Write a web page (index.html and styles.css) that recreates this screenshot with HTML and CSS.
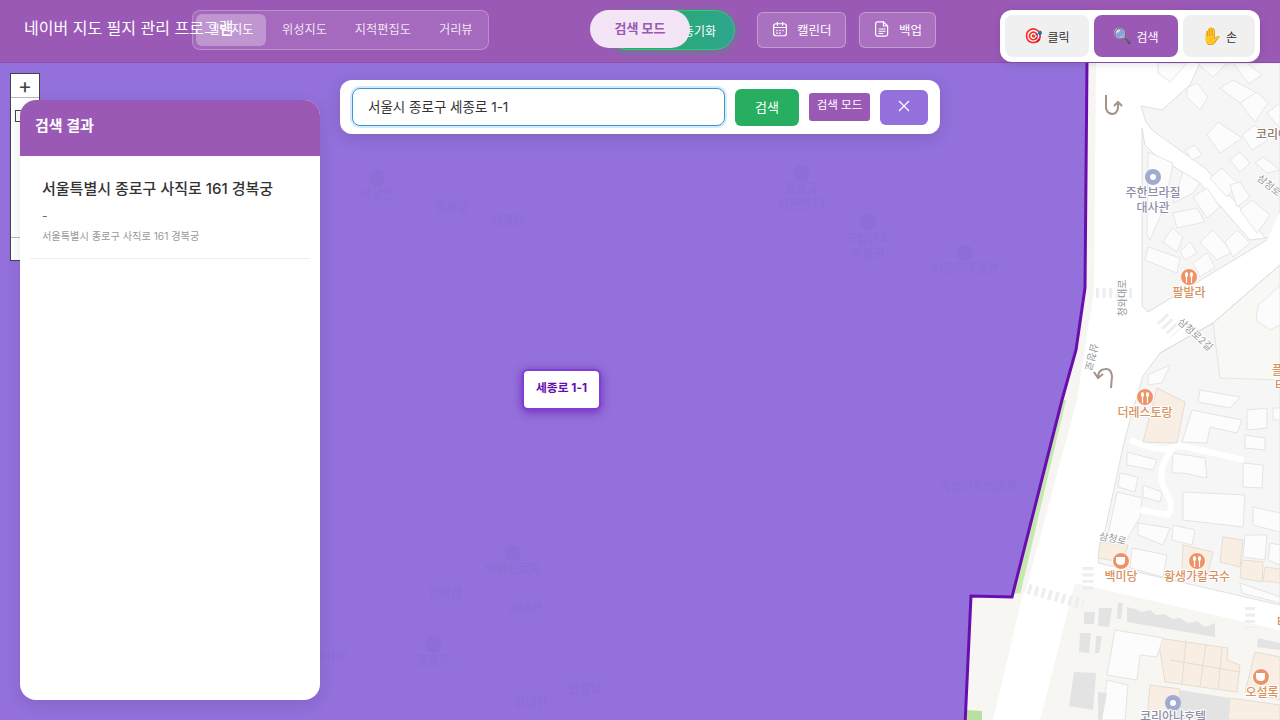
FILE: index.html
```html
<!DOCTYPE html>
<html lang="ko">
<head>
    <meta charset="UTF-8">
    <meta name="viewport" content="width=device-width, initial-scale=1.0">
    <title>네이버 지도 필지 관리 프로그램</title>
    <link rel="stylesheet" href="styles.css">
</head>
<body>

    <header class="header">
        <h1 class="app-title">네이버 지도 필지 관리 프로그램</h1>

        <div class="map-types">
            <button class="map-type active">일반지도</button>
            <button class="map-type">위성지도</button>
            <button class="map-type">지적편집도</button>
            <button class="map-type">거리뷰</button>
        </div>

        <div class="sync-toggle">
            <span class="sync-label">동기화</span>
            <span class="mode-pill">검색 모드</span>
        </div>

        <button class="header-btn btn-calendar">
            <svg class="header-icon" viewBox="0 0 24 24"><rect x="3.500" y="5" width="17" height="16" rx="3"/><path d="M3.500 10h17M8.500 3v4M15.500 3v4"/><path d="M8 14h.01M12 14h.01M16 14h.01M8 17.500h.01M12 17.500h.01" stroke-width="2.200"/></svg>
            캘린더
        </button>
        <button class="header-btn btn-backup">
            <svg class="header-icon" viewBox="0 0 24 24"><path d="M6 2.500h8l5.500 5.500v11a2.500 2.500 0 0 1-2.500 2.500H6A2.500 2.500 0 0 1 3.500 19V5A2.500 2.500 0 0 1 6 2.500z"/><path d="M14 2.500V8h5.500M8 12h8M8 15h8M8 18h5"/></svg>
            백업
        </button>

        <div class="tools">
            <button class="tool tool-click"><span class="tool-emoji">🎯</span>클릭</button>
            <button class="tool tool-search active"><span class="tool-emoji">🔍</span>검색</button>
            <button class="tool tool-hand"><span class="tool-emoji">✋</span>손</button>
        </div>
    </header>

    <main class="map-area">
        <svg class="map" viewBox="0 63 1280 657" width="1280" height="657">
            <!-- ground -->
            <rect x="960" y="63" width="320" height="657" fill="#ffffff"/>
            <polygon points="1089,63 1096,63 1094,290 1077,400 1025,593 1013,597 1062,400 1076,350 1085,288" fill="#f6f5f1"/>
            <polygon points="1062,400 1066,400 1020,595 1012,597" fill="#c6e6b2"/>
            <polygon points="968,597 1023,593 993,720 964,720" fill="#f7f6f3"/>
            <polygon points="967,710 982,711 982,720 966,720" fill="#b9e0a2"/>

            <!-- blocks -->
            <g fill="#f6f6f6" stroke="#e0e0de" stroke-width="1">
                <polygon points="1141,106 1162,110 1190,85 1200,63 1280,63 1280,258 1253,222 1205,168 1152,130 1146,122"/>
                <polygon points="1142,128 1145,145 1155,155 1200,183 1250,240 1267,238 1280,228 1280,212 1280,235 1148,312 1142,306"/>
                <polygon points="1160,353 1213,323 1280,265 1280,605 1098,563 1123,447 1130,420 1143,376"/>
            </g>
            <polygon points="1213,323 1280,265 1280,380 1220,378" fill="#f8f8f5" stroke="#e6e5e0"/>
            <polygon points="1075,583 1280,630 1280,720 1040,720" fill="#f7f6f3"/>
            <path d="M1147,140 L1200,173 L1253,233" fill="none" stroke="#ffffff" stroke-width="7"/>
            <polygon points="1280,212 1280,262 1214,318 1162,350 1148,312 1267,240" fill="#ffffff"/>
            <path d="M1148,312 L1267,240 M1160,353 L1213,323 L1280,265" fill="none" stroke="#dededa" stroke-width="1"/>

            <!-- upper buildings -->
            <g fill="#fcfcfc" stroke="#e6e6e4" stroke-width="1">
                <polygon points="1158,63 1187,63 1170,82 1158,73"/>
                <polygon points="1197,63 1213,77 1227,63"/>
                <polygon points="1187,88 1197,83 1208,97 1200,110 1187,97"/>
                <polygon points="1207,135 1218,122 1242,138 1220,153"/>
                <polygon points="1220,88 1233,80 1257,93 1240,103"/>
                <polygon points="1240,103 1257,92 1268,103 1255,122"/>
                <polygon points="1233,63 1247,63 1262,75 1249,84"/>
                <polygon points="1230,160 1240,152 1250,163 1240,172"/>
                <polygon points="1255,163 1263,157 1280,170 1267,173"/>
                <polygon points="1267,113 1280,103 1280,128"/>
                <polygon points="1242,135 1255,125 1268,140 1252,150"/>
                <polygon points="1185,150 1195,145 1202,155 1192,160"/>
                <polygon points="1148,152 1173,163 1165,205 1150,240 1147,235"/>
                <polygon points="1183,172 1200,183 1193,193 1173,203"/>
                <polygon points="1193,197 1207,188 1220,207 1207,218"/>
                <polygon points="1210,178 1222,168 1237,183 1227,197"/>
                <polygon points="1230,185 1240,182 1250,197 1237,207"/>
                <polygon points="1240,210 1252,200 1270,215 1257,233"/>
                <polygon points="1173,213 1197,208 1205,222 1177,228"/>
                <polygon points="1163,242 1172,228 1183,237 1177,252"/>
                <polygon points="1145,260 1148,247 1180,258 1177,273"/>
                <polygon points="1200,242 1213,230 1232,252 1217,260"/>
                <polygon points="1225,242 1237,230 1250,243 1233,257"/>
                <polygon points="1193,263 1207,253 1215,267 1200,277"/>
                <polygon points="1180,252 1190,242 1197,253 1185,260"/>
                <polygon points="1258,306 1280,285 1280,325 1270,330 1256,320"/>
                <polygon points="1148,375 1170,365 1162,383 1148,385"/>
            </g>

            <!-- lower buildings -->
            <g fill="#fcfcfc" stroke="#e4e4e2" stroke-width="1">
                <polygon points="1127,452 1157,460 1153,470 1127,465"/>
                <polygon points="1120,473 1138,477 1135,492 1118,487"/>
                <polygon points="1117,492 1142,498 1140,517 1125,543 1107,540"/>
                <polygon points="1143,485 1162,492 1160,502 1143,497"/>
                <polygon points="1173,453 1205,458 1207,478 1183,473 1172,473"/>
                <polygon points="1183,492 1245,495 1243,527 1183,520"/>
                <polygon points="1138,523 1170,528 1163,545 1138,535"/>
                <polygon points="1173,525 1195,530 1192,545 1172,540"/>
                <polygon points="1132,548 1167,555 1163,577 1130,568"/>
                <polygon points="1192,410 1242,420 1237,433 1210,427 1207,443 1182,442"/>
                <polygon points="1243,463 1263,465 1262,488 1243,487"/>
                <polygon points="1247,410 1267,408 1267,428 1247,430"/>
                <polygon points="1245,435 1265,438 1265,450 1245,448"/>
                <polygon points="1273,408 1280,408 1280,420 1273,420"/>
                <polygon points="1253,507 1280,513 1280,532 1253,525"/>
                <polygon points="1245,535 1267,535 1265,560 1243,557"/>
                <polygon points="1270,543 1280,545 1280,565 1268,560"/>
                <polygon points="1240,583 1280,597 1280,603 1242,593"/>
                <polygon points="1200,390 1240,397 1230,408 1198,402"/>
            </g>
            <path d="M1130,440 Q1165,455 1178,445 L1244,460 M1172,450 Q1155,470 1165,490 Q1175,505 1168,515 L1140,510" fill="none" stroke="#ffffff" stroke-width="6"/>

            <!-- beige buildings -->
            <g fill="#f9eee3" stroke="#e6ddd2" stroke-width="1">
                <polygon points="1157,388 1185,402 1177,443 1143,442"/>
                <polygon points="1100,542 1128,545 1123,562 1098,558"/>
                <polygon points="1183,545 1213,552 1207,577 1182,570"/>
                <polygon points="1223,537 1243,540 1240,567 1220,562"/>
                <polygon points="1242,560 1263,562 1262,582 1240,578"/>
                <polygon points="1265,567 1280,569 1280,583 1263,581"/>
                <polygon points="1158,638 1228,648 1227,660 1240,665 1237,692 1165,682"/>
                <polygon points="1255,652 1280,657 1280,700 1245,692"/>
                <polygon points="1150,685 1180,689 1177,720 1147,720"/>
                <polygon points="1230,698 1280,705 1280,720 1228,720"/>
            </g>
            <path d="M1170,660 L1240,672 M1186,640 L1182,684 M1206,644 L1200,686 M1222,648 L1218,690" stroke="#e6ddd2" fill="none"/>

            <!-- bottom block -->
            <g fill="#fcfcfc" stroke="#e4e4e2" stroke-width="1">
                <polygon points="1115,630 1163,638 1157,657 1140,655 1137,680 1107,675"/>
                <polygon points="1107,680 1128,685 1125,720 1100,720"/>
            </g>
            <g fill="#e3e3e3">
                <polygon points="1127,607 1135,609 1142,612 1150,610 1156,615 1165,614 1172,619 1180,618 1188,623 1197,621 1205,627 1215,623 1215,637 1127,622"/>
                <polygon points="1084,612 1095,612 1094,624 1084,624"/>
                <polygon points="1099,608 1112,608 1109,627 1098,626"/>
                <polygon points="1118,603 1123,603 1121,619 1117,619"/>
                <polygon points="1080,633 1091,633 1089,653 1079,652"/>
                <polygon points="1096,636 1102,636 1099,653 1095,653"/>
                <polygon points="1074,672 1096,673 1093,710 1069,706"/>
                <polygon points="1098,692 1107,693 1102,720 1098,720"/>
                <polygon points="1258,638 1280,643 1280,650 1257,647"/>
                <polygon points="1180,690 1230,698 1228,720 1177,720"/>
            </g>

            <!-- crosswalks -->
            <g fill="none" stroke="#eceeef">
                <path d="M1096,293 H1134" stroke-width="10" stroke-dasharray="3 3.600"/>
                <path d="M1162,318 L1176,333" stroke-width="14" stroke-dasharray="3 3.500"/>
                <path d="M1028,589 L1083,604" stroke-width="10" stroke-dasharray="3.500 3.500"/>
                <path d="M1088,567 V591" stroke-width="11" stroke-dasharray="3 3.500"/>
                <path d="M1250,607 V628" stroke-width="10" stroke-dasharray="3 3.500"/>
            </g>

            <!-- turn arrows -->
            <g fill="none" stroke="#a39389" stroke-width="2">
                <path d="M1106,95 V108 Q1107,114 1113,114 Q1119,113 1118,103 M1114,106 L1118,102 L1122,106"/>
                <path d="M1111,388 L1112,376 Q1111,368 1105,369 Q1098,370 1098,377 M1094,372 L1098,378 L1103,374"/>
            </g>

            <!-- place icons -->
            <circle cx="1153" cy="177" r="8" fill="#a1aacf"/>
            <circle cx="1153" cy="177" r="3" fill="#ffffff"/>
            <circle cx="1173" cy="703" r="8" fill="#a1aacf"/>
            <circle cx="1173" cy="703" r="3" fill="#ffffff"/>
            <g fill="#ee9268" stroke="#ffffff" stroke-width="1">
                <circle cx="1189" cy="277" r="8.500"/>
                <circle cx="1145" cy="397" r="8.500"/>
                <circle cx="1197" cy="561" r="8.500"/>
                <circle cx="1121" cy="561" r="8.500"/>
                <circle cx="1261" cy="677" r="8.500"/>
            </g>
            <g fill="none" stroke="#ffffff" stroke-width="1.200">
                <path d="M1186.500,275 V283 M1191.500,275 V283"/>
                <path d="M1142.500,395 V403 M1147.500,395 V403"/>
                <path d="M1194.500,559 V567 M1199.500,559 V567"/>
            </g>
            <g fill="#ffffff">
                <ellipse cx="1186.500" cy="274.500" rx="1.600" ry="2.500"/>
                <ellipse cx="1191.500" cy="274.500" rx="1.600" ry="2.500"/>
                <ellipse cx="1142.500" cy="394.500" rx="1.600" ry="2.500"/>
                <ellipse cx="1147.500" cy="394.500" rx="1.600" ry="2.500"/>
                <ellipse cx="1194.500" cy="558.500" rx="1.600" ry="2.500"/>
                <ellipse cx="1199.500" cy="558.500" rx="1.600" ry="2.500"/>
                <path d="M1116,557 H1125 V561 Q1125,565 1121,565 Q1116,565 1116,561 Z"/>
                <path d="M1256,673 H1265 V677 Q1265,681 1261,681 Q1256,681 1256,677 Z"/>
            </g>

            <!-- map labels -->
            <g class="map-label label-place">
                <text x="1153" y="197">주한브라질</text>
                <text x="1153" y="212">대사관</text>
                <text x="1173" y="721">코리아나호텔</text>
            </g>
            <g class="map-label label-food">
                <text x="1189" y="297">팔발라</text>
                <text x="1145" y="417">더레스토랑</text>
                <text x="1121" y="581">백미당</text>
                <text x="1197" y="581">황생가칼국수</text>
                <text x="1262" y="697">오설록</text>
                <text class="label-cut" x="1272" y="375">플래</text>
                <text class="label-cut" x="1275" y="390">타워</text>
                <text class="label-cut" x="1277" y="627">타워</text>
            </g>
            <text class="map-label label-brown label-cut" x="1256" y="139">코리아나</text>
            <g class="map-label label-road">
                <text transform="translate(1126,298) rotate(-90)">청와대로</text>
                <text transform="translate(1088,356) rotate(105)">삼청로</text>
                <text transform="translate(1193,337) rotate(42)">삼청로2길</text>
                <text transform="translate(1112,542) rotate(12)">삼청로</text>
                <text transform="translate(1267,188) rotate(40)">삼청로</text>
            </g>

            <!-- parcel overlay -->
            <polygon points="-5,58 1087,58 1087,63 1085,288 1076,350 1062,400 1012,597 971,596 965,725 -5,725" fill="#9370db" stroke="#6a0dad" stroke-width="3"/>

            <!-- map showing through the overlay -->
            <g fill="none" stroke="#916fd9" stroke-width="1">
                <rect x="425" y="190" width="120" height="60"/>
                <rect x="445" y="290" width="180" height="170"/>
                <rect x="410" y="515" width="90" height="120"/>
                <rect x="475" y="550" width="160" height="80"/>
                <rect x="720" y="160" width="45" height="160"/>
                <rect x="825" y="265" width="110" height="110"/>
                <rect x="910" y="225" width="100" height="170"/>
                <rect x="370" y="640" width="60" height="70"/>
                <rect x="600" y="650" width="70" height="60"/>
            </g>
            <g fill="#8f6dd6">
                <circle cx="377" cy="178" r="8"/>
                <circle cx="801" cy="173" r="8"/>
                <circle cx="868" cy="222" r="8"/>
                <circle cx="965" cy="253" r="8"/>
                <circle cx="513" cy="553" r="8"/>
                <circle cx="433" cy="645" r="8"/>
            </g>
            <g class="map-label label-ghost">
                <text x="377" y="199">미상문</text>
                <text x="452" y="212">함화당</text>
                <text x="508" y="225">집경당</text>
                <text x="801" y="193">경복궁</text>
                <text x="801" y="208">선원전 터</text>
                <text x="868" y="243">국립민속</text>
                <text x="868" y="258">박물관</text>
                <text x="965" y="273">어린이박물관</text>
                <text x="513" y="573">아미산굴뚝</text>
                <text x="445" y="598">함원전</text>
                <text x="525" y="613">교태전</text>
                <text x="433" y="665">흥경각</text>
                <text x="330" y="661">경회루</text>
                <text x="585" y="693">연길당</text>
                <text x="531" y="707">강녕전</text>
                <text x="978" y="491">국립민속박물관</text>
            </g>
        </svg>

        <div class="zoom-control">
            <button class="zoom-btn">+</button>
            <span class="zoom-track"><i class="zoom-thumb"></i></span>
            <button class="zoom-btn zoom-out"></button>
        </div>

        <aside class="results">
            <div class="results-head">검색 결과</div>
            <div class="result-item">
                <div class="result-title">서울특별시 종로구 사직로 161 경복궁</div>
                <div class="result-dash">-</div>
                <div class="result-addr">서울특별시 종로구 사직로 161 경복궁</div>
            </div>
        </aside>

        <div class="search-bar">
            <input class="search-input" type="text" value="서울시 종로구 세종로 1-1">
            <button class="search-btn">검색</button>
            <span class="search-tag">검색 모드</span>
            <button class="search-close">
                <svg class="close-icon" viewBox="0 0 12 12"><path d="M1 1l10 10M11 1L1 11"/></svg>
            </button>
        </div>

        <div class="marker">세종로 1-1</div>
    </main>

</body>
</html>
```

FILE: styles.css
```css
* {
    box-sizing: border-box;
}
body {
    margin: 0;
    width: 1280px;
    height: 720px;
    overflow: hidden;
    display: flex;
    flex-direction: column;
    font-family: Inter, "Noto Sans CJK KR", sans-serif;
    color: #333;
    background-color: #9370db;
}
button {
    font-family: inherit;
    cursor: pointer;
}

/* header */
.header {
    display: flex;
    align-items: flex-start;
    height: 63px;
    padding: 10px 20px 0 24px;
    background-color: #9b59b6;
    border-bottom: 1px solid #8e4fab;
    position: relative;
    z-index: 5;
}
.app-title {
    flex: 0 0 168px;
    min-width: 0;
    margin: 5px 0 0;
    font-size: 16px;
    line-height: 26px;
    font-weight: 400;
    color: #fff;
    white-space: nowrap;
}
.map-types {
    display: flex;
    flex: none;
    width: 297px;
    height: 40px;
    padding: 3px;
    border: 1px solid rgba(255, 255, 255, 0.25);
    border-radius: 8px;
    background-color: rgba(255, 255, 255, 0.1);
}
.map-type {
    flex: none;
    height: 32px;
    margin-right: 0;
    padding: 0 14px 2px;
    border: none;
    border-radius: 6px;
    background: none;
    color: rgba(255, 255, 255, 0.85);
    font-size: 12.200px;
    white-space: nowrap;
}
.map-type.active {
    width: 70px;
    margin-right: 2px;
    padding: 0 0 2px;
    background-color: rgba(255, 255, 255, 0.3);
    color: #fff;
}
.sync-toggle {
    position: relative;
    display: flex;
    flex: none;
    align-items: center;
    justify-content: flex-end;
    width: 128px;
    height: 40px;
    margin-left: 118px;
    padding-right: 18px;
    border: 1px solid #2ecc71;
    border-radius: 20px;
    background: linear-gradient(90deg, #27ae60, #2ea58f);
    box-shadow: 0 2px 10px rgba(39, 174, 96, 0.45);
    color: #fff;
    font-size: 12px;
}
.mode-pill {
    position: absolute;
    left: -18px;
    top: -1px;
    width: 100px;
    height: 38px;
    border-radius: 19px;
    background-color: #f3e5f5;
    color: #9b59b6;
    font-size: 13px;
    font-weight: 700;
    line-height: 36px;
    text-align: center;
}
.header-btn {
    display: flex;
    flex: none;
    align-items: center;
    gap: 8px;
    height: 36px;
    margin-top: 2px;
    padding: 0 13px 2px;
    border: 1px solid rgba(255, 255, 255, 0.3);
    border-radius: 6px;
    background-color: rgba(255, 255, 255, 0.15);
    color: #fff;
    font-size: 12.500px;
    white-space: nowrap;
}
.btn-calendar {
    width: 89px;
    margin-left: 22px;
}
.btn-backup {
    width: 77px;
    margin-left: 13px;
}
.header-icon {
    flex: none;
    width: 18px;
    height: 18px;
    fill: none;
    stroke: #fff;
    stroke-width: 1.600;
    stroke-linecap: round;
    stroke-linejoin: round;
}
.tools {
    display: flex;
    flex: none;
    gap: 5px;
    height: 52px;
    margin-left: auto;
    padding: 5px;
    border-radius: 12px;
    background-color: #fff;
    box-shadow: 0 2px 8px rgba(0, 0, 0, 0.12);
}
.tool {
    display: flex;
    align-items: center;
    justify-content: center;
    gap: 4px;
    height: 42px;
    padding: 0;
    border: none;
    border-radius: 8px;
    background-color: #f0f0f0;
    color: #333;
    font-size: 12px;
    white-space: nowrap;
}
.tool-emoji {
    font-size: 15px;
    line-height: 18px;
}
.tool-click, .tool-search {
    width: 84px;
}
.tool-hand {
    width: 72px;
}
.tool-hand .tool-emoji {
    font-size: 17px;
}
.tool.active {
    background-color: #9b59b6;
    color: #fff;
}

/* map */
.map-area {
    position: relative;
    flex: 1;
    overflow: hidden;
}
.map {
    position: absolute;
    left: 0;
    top: 0;
    display: block;
}
.map-label {
    font-size: 12px;
    text-anchor: middle;
    paint-order: stroke;
    stroke: #fff;
    stroke-width: 2px;
}
.map-label .label-cut, .label-cut {
    text-anchor: start;
}
.label-place {
    fill: #8b90a6;
    font-weight: 500;
}
.label-food {
    fill: #d9925f;
    font-weight: 500;
}
.label-brown {
    fill: #8d7d70;
    font-weight: 500;
}
.label-road {
    fill: #93979c;
    font-size: 10px;
}
.label-ghost {
    fill: #8f6dd6;
    stroke: none;
    font-weight: 500;
}

/* leftover map zoom control, mostly hidden by the results panel */
.zoom-control {
    position: absolute;
    left: 10px;
    top: 10px;
    display: flex;
    flex-direction: column;
    width: 30px;
    height: 188px;
    border: 1px solid #444;
    background-color: #fff;
}
.zoom-btn {
    flex: none;
    width: 28px;
    height: 24px;
    padding: 0;
    border: none;
    border-bottom: 1px solid #bbb;
    background: none;
    color: #444;
    font-size: 21px;
    line-height: 22px;
}
.zoom-track {
    flex: 1;
    padding: 12px 0 0 4px;
}
.zoom-thumb {
    display: block;
    width: 11px;
    height: 12px;
    border: 1px solid #444;
}
.zoom-out {
    height: 23px;
    border-bottom: none;
    border-top: 1px solid #bbb;
}

/* results panel */
.results {
    position: absolute;
    left: 20px;
    top: 37px;
    width: 300px;
    height: 600px;
    border-radius: 16px;
    overflow: hidden;
    background-color: #fff;
    box-shadow: 0 4px 16px rgba(0, 0, 0, 0.1);
}
.results-head {
    height: 56px;
    padding-left: 15px;
    background-color: #9b59b6;
    color: #fff;
    font-size: 15px;
    font-weight: 700;
    line-height: 52px;
}
.result-item {
    height: 103px;
    margin: 0 10px;
    padding: 20px 12px 0;
    border-bottom: 1px solid #eee;
}
.result-title {
    font-size: 15px;
    font-weight: 500;
    line-height: 26px;
    color: #333;
    white-space: nowrap;
}
.result-dash {
    margin-top: 4px;
    font-size: 12px;
    line-height: 20px;
    color: #666;
}
.result-addr {
    font-size: 10.200px;
    line-height: 20px;
    color: #999;
    white-space: nowrap;
}

/* search bar */
.search-bar {
    position: absolute;
    left: 340px;
    top: 17px;
    display: flex;
    align-items: center;
    width: 600px;
    height: 54px;
    padding: 0 12px;
    border-radius: 12px;
    background-color: #fff;
    box-shadow: 0 4px 16px rgba(0, 0, 0, 0.12);
}
.search-input {
    flex: none;
    width: 373px;
    height: 38px;
    padding: 0 15px 2px;
    border: 1px solid #3498db;
    border-radius: 8px;
    outline: none;
    box-shadow: 0 0 0 2px rgba(52, 152, 219, 0.2);
    color: #333;
    font-family: inherit;
    font-size: 13.500px;
}
.search-btn {
    width: 64px;
    height: 37px;
    margin-left: 10px;
    padding: 0 0 2px;
    border: none;
    border-radius: 6px;
    background-color: #27ae60;
    color: #fff;
    font-size: 13px;
}
.search-tag {
    width: 61px;
    height: 28px;
    margin-left: 10px;
    border-radius: 3px;
    background-color: #9b59b6;
    color: #fff;
    font-size: 11.500px;
    line-height: 25px;
    text-align: center;
    white-space: nowrap;
}
.search-close {
    display: flex;
    align-items: center;
    justify-content: center;
    width: 48px;
    height: 35px;
    margin-left: 10px;
    padding: 0 0 2px;
    border: none;
    border-radius: 6px;
    background-color: #9370db;
}
.close-icon {
    width: 12px;
    height: 12px;
    fill: none;
    stroke: #fff;
    stroke-width: 1.300;
}

/* address marker */
.marker {
    position: absolute;
    left: 522px;
    top: 306px;
    width: 79px;
    height: 41px;
    border: 2px solid #7e3fd6;
    border-radius: 6px;
    background-color: #fff;
    box-shadow: 0 2px 10px rgba(106, 13, 173, 0.7);
    color: #6a0dad;
    font-size: 11.800px;
    font-weight: 700;
    line-height: 34px;
    text-align: center;
    white-space: nowrap;
}
```
